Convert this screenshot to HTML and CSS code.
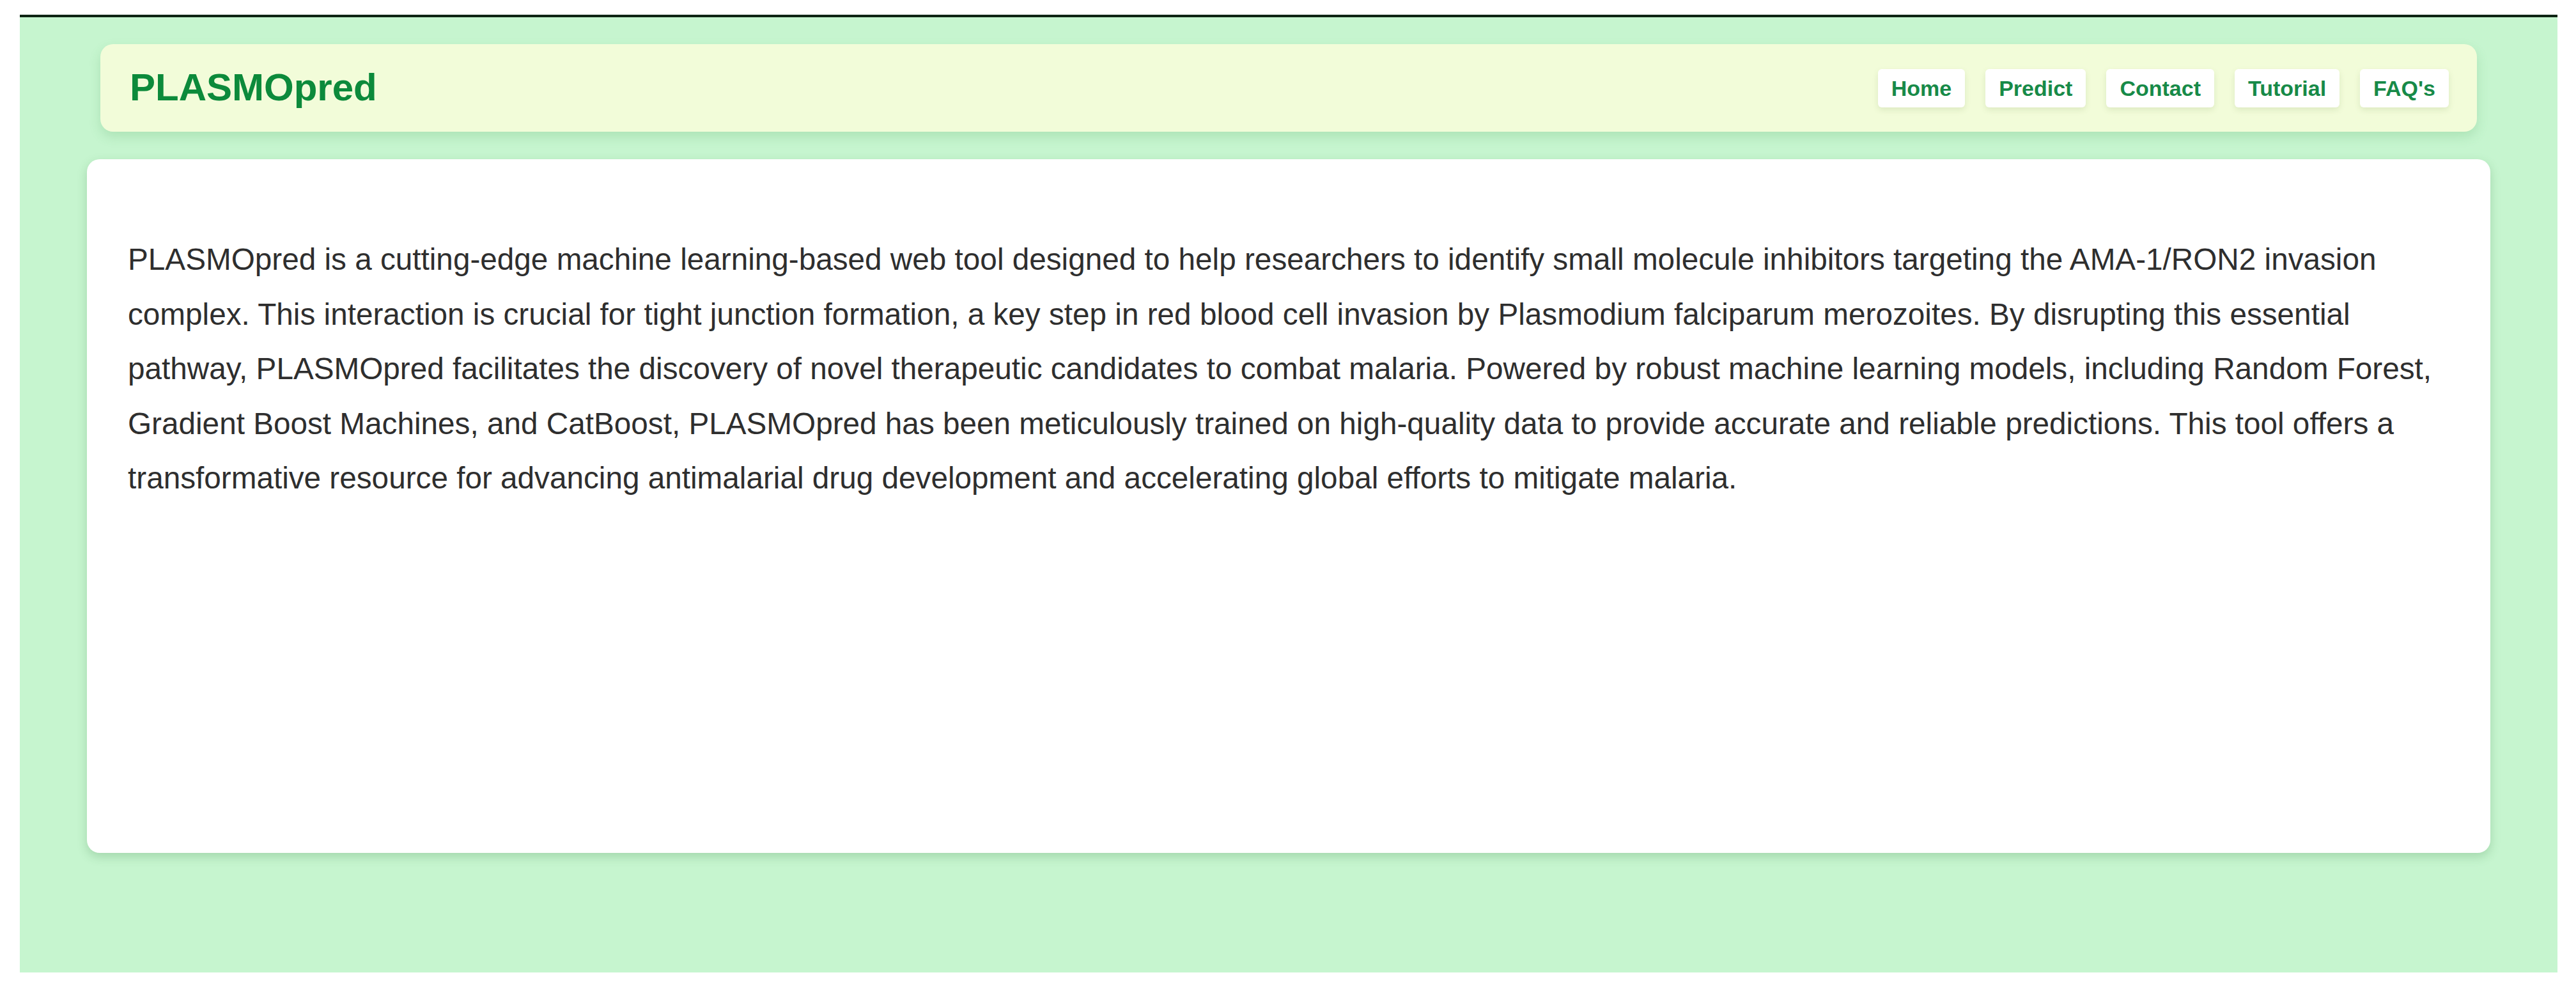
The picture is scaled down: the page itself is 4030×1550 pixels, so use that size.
FILE: index.html
```html
<!DOCTYPE html>
<html lang="en">
<head>
<meta charset="utf-8">
<title>PLASMOpred</title>
<link rel="stylesheet" href="styles.css">
</head>
<body>
<div class="frame">
  <div class="page">
    <header class="navbar">
      <div class="brand">PLASMOpred</div>
      <nav class="links">
        <a class="link" href="#">Home</a>
        <a class="link" href="#">Predict</a>
        <a class="link" href="#">Contact</a>
        <a class="link" href="#">Tutorial</a>
        <a class="link" href="#">FAQ's</a>
      </nav>
    </header>
    <main class="card">
      <p class="intro">PLASMOpred is a cutting-edge machine learning-based web tool designed to help researchers to identify small molecule inhibitors targeting the AMA-1/RON2 invasion complex. This interaction is crucial for tight junction formation, a key step in red blood cell invasion by Plasmodium falciparum merozoites. By disrupting this essential pathway, PLASMOpred facilitates the discovery of novel therapeutic candidates to combat malaria. Powered by robust machine learning models, including Random Forest, Gradient Boost Machines, and CatBoost, PLASMOpred has been meticulously trained on high-quality data to provide accurate and reliable predictions. This tool offers a transformative resource for advancing antimalarial drug development and accelerating global efforts to mitigate malaria.</p>
    </main>
  </div>
</div>
</body>
</html>
```

FILE: styles.css
```css
html, body {
  margin: 0;
  padding: 0;
  background: #ffffff;
  height: 100%;
}

body {
  font-family: "Liberation Sans", Arial, sans-serif;
  overflow: hidden;
}

.frame {
  box-sizing: border-box;
  margin: 23px 29px 0 31px;
  height: 1498px;
  background: #c6f5cf;
  border-top: 4px solid #0e2414;
  padding-top: 42px;
}

.page {
  padding: 0 105px;
  display: flex;
  flex-direction: column;
  gap: 43px;
}

.navbar {
  box-sizing: border-box;
  margin: 0 21px;
  height: 137px;
  background: #f2fcd9;
  border-radius: 20px;
  box-shadow: 0 8px 18px rgba(60, 150, 70, 0.18);
  display: flex;
  align-items: center;
  justify-content: space-between;
  padding: 0 44px 0 46px;
}

.brand {
  font-size: 60px;
  font-weight: bold;
  color: #0c8a3b;
  line-height: 1;
  padding-bottom: 2px;
}

.links {
  display: flex;
  gap: 32px;
  align-items: center;
}

.link {
  display: block;
  box-sizing: border-box;
  height: 60px;
  line-height: 60px;
  padding: 0 21px;
  background: #ffffff;
  border-radius: 6px;
  box-shadow: 0 4px 10px rgba(90, 120, 60, 0.14);
  color: #178a48;
  font-size: 34px;
  font-weight: bold;
  text-decoration: none;
}

.card {
  box-sizing: border-box;
  min-height: 1085px;
  background: #ffffff;
  border-radius: 20px;
  box-shadow: 0 6px 16px rgba(40, 110, 50, 0.22);
  padding: 114px 64px 60px 64px;
}

.intro {
  margin: 0;
  font-size: 47.7px;
  line-height: 85.5px;
  color: #2e2e2e;
}
```
